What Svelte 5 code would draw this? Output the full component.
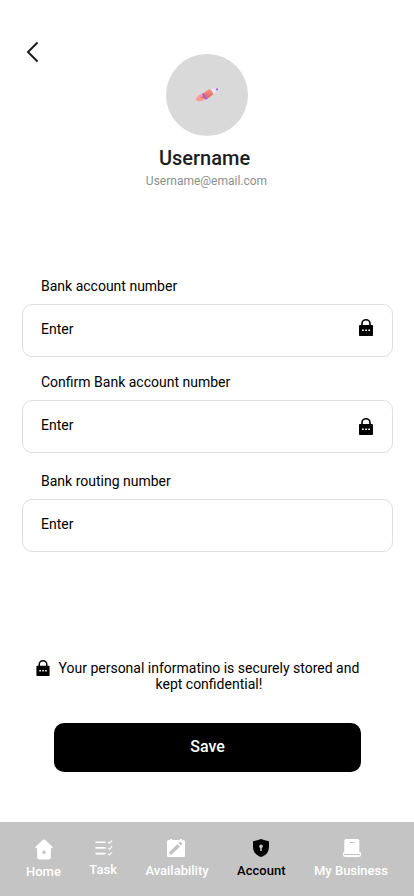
<script>
  const fields = [
    { id: 'account', label: 'Bank account number', lock: true },
    { id: 'confirm', label: 'Confirm Bank account number', lock: true },
    { id: 'routing', label: 'Bank routing number', lock: false }
  ];
</script>

{#snippet lock()}
  <svg class="lock" width="14" height="17" viewBox="0 0 14 17">
    <path d="M3 7V4.5a4 3.7 0 0 1 8 0V7" fill="none" stroke="#000" stroke-width="1.6" />
    <rect y="6" width="14" height="11" rx="0.8" fill="#000" />
    <path d="M3.1 11.3h1.7M6.2 11.3h1.7M9.3 11.3H11" stroke="#fff" stroke-width="1.6" />
  </svg>
{/snippet}

<main>
  <header>
    <button class="back" aria-label="Back">
      <svg width="13" height="22" viewBox="0 0 13 22">
        <path d="M11.5 1.5 2 11l9.5 9.5" fill="none" stroke="#1d1d1d" stroke-width="2" />
      </svg>
    </button>
    <div class="avatar">
      <svg width="24" height="16" viewBox="0 0 24 16">
        <defs>
          <linearGradient id="body" x1="0" y1="0" x2="0" y2="1">
            <stop offset="0" stop-color="#f4948b" />
            <stop offset="1" stop-color="#df625e" />
          </linearGradient>
        </defs>
        <path d="M8 6.2Q2.5 8 1 11.5q-.5 2.5 3 3 4-.1 7-2.9Z" fill="#f9a198" />
        <path d="M8.5 7.7 5 11l4.8 1Z" fill="#ee7770" />
        <path d="m8 6.4 7-4.8q3 1.8 3.3 5.9l-6.9 4.9q-3.1-1.3-3.4-6Z" fill="url(#body)" />
        <path d="m14.6 2 7-.4.7 1.5-4.1 4.4q-.5-3.9-3.6-5.5Z" fill="#e9e7ed" />
        <path d="M8.1 6.4q.6 3.8 3.2 5.8" fill="none" stroke="#a052f5" stroke-width="1.7" />
        <path d="m20.5 2 2.3-1 .2 1.6-1.5 1.2Z" fill="#9961ef" />
      </svg>
    </div>
    <h1>Username</h1>
    <p class="email">Username@email.com</p>
  </header>

  <form>
    {#each fields as field}
      <div class="field {field.id}">
        <span class="label">{field.label}</span>
        <div class="box">
          <span>Enter</span>
          {#if field.lock}{@render lock()}{/if}
        </div>
      </div>
    {/each}
  </form>

  <div class="notice">
    {@render lock()}
    <p>Your personal informatino is securely stored and<br />kept confidential!</p>
  </div>

  <button class="save">Save</button>

  <nav>
    <div class="item home">
      <svg width="18" height="21" viewBox="0 0 18 21">
        <path fill="#fff" fill-rule="evenodd" d="M8 .8Q9 0 10 .8l7.4 7q1 1.4-.9 1.5h-.6v8.9q0 2.3-2.3 2.3H4.4q-2.3 0-2.3-2.3V9.3h-.6Q-.4 9.2.6 7.8ZM9 11.6a1.7 1.7 0 1 0 0 3.4 1.7 1.7 0 0 0 0-3.4Z" />
      </svg>
      <span>Home</span>
    </div>
    <div class="item task">
      <svg width="18" height="16" viewBox="0 0 18 16">
        <g fill="none" stroke="#fff" stroke-linecap="round" stroke-linejoin="round">
          <path d="M1 2.2h9M1 7.9h9M1 13.6h9" stroke-width="1.6" />
          <path d="m13.5 2.2 1.1 1 2.2-2.4m-3.3 7.3 1.1 1 2.2-2.4m-3.3 7.2 1.1 1 2.2-2.4" stroke-width="1.1" />
        </g>
      </svg>
      <span>Task</span>
    </div>
    <div class="item availability">
      <svg width="18" height="18" viewBox="0 0 18 18">
        <path d="M1.5 1H3V0h2v1h8V0h2v1h1.5Q18 1 18 2.5v14q0 1.5-1.5 1.5h-15Q0 18 0 16.5v-14Q0 1 1.5 1Z" fill="#fff" />
        <path d="m2.4 13.1 8.1-8.2 2.5 2.5-8.1 8.2H2.4ZM11.3 4.1l1-1q.8-.6 1.5 0l1 1q.7.7 0 1.5l-1 1Z" fill="#c4c4c4" />
      </svg>
      <span>Availability</span>
    </div>
    <div class="item account">
      <svg width="16" height="18" viewBox="0 0 16 18">
        <path d="M8 0q4 1.8 7.2 1.9.8.1.8.9v4.7Q16 14.6 9.5 17.5q-1.5.7-3 0Q0 14.6 0 7.5V2.8q0-.8.8-.9Q4 1.8 8 0Z" fill="#000" />
        <path d="M8 5.4a1.9 1.9 0 0 0-.8 3.6V12h1.6V9A1.9 1.9 0 0 0 8 5.4Z" fill="#c4c4c4" />
      </svg>
      <span>Account</span>
    </div>
    <div class="item business">
      <svg width="18" height="18" viewBox="0 0 18 18">
        <path d="M3.5 0h11q1.8 0 1.8 1.8v11.1h.7q1 0 1 1v1.8Q18 18 15.7 18H2.3Q0 18 0 15.7v-1.8q0-1 1-1h.3V2Q1.3 0 3.5 0Z" fill="#fff" />
        <path d="M7.4 3.5h3.5" stroke="#c4c4c4" stroke-width="1.2" stroke-linecap="round" />
        <path d="M1 15.5h16" stroke="#c4c4c4" stroke-width="1.2" />
      </svg>
      <span>My Business</span>
    </div>
  </nav>
</main>

<style>
  :global(body) {
    background: #fff;
  }
  main {
    display: flex;
    flex-direction: column;
    box-sizing: border-box;
    width: 414px;
    height: 896px;
    font-family: Roboto, sans-serif;
    color: #000;
    background: #fff;
  }
  h1,
  p {
    margin: 0;
  }
  button {
    padding: 0;
    border: 0;
    font: inherit;
    background: none;
  }
  svg {
    display: block;
    flex: none;
  }
  header {
    display: flex;
    flex-direction: column;
    align-items: center;
    height: 277px;
  }
  .back {
    align-self: flex-start;
    height: 22px;
    margin: 41px 0 -9px 26px;
  }
  .avatar {
    display: flex;
    align-items: center;
    justify-content: center;
    width: 82px;
    height: 82px;
    border-radius: 50%;
    background: #d9d9d9;
  }
  h1 {
    margin: 10px 5px 0 0;
    font-size: 20px;
    line-height: 24px;
    font-weight: 500;
    color: #1d1d1d;
  }
  .email {
    margin: 4px 1px 0 0;
    font-size: 12px;
    line-height: 14px;
    color: #8e8e8e;
  }
  form {
    display: flex;
    flex-direction: column;
    padding: 0 21px 0 22px;
  }
  .field {
    height: 96px;
  }
  .confirm {
    height: 99px;
  }
  .routing {
    height: 80px;
  }
  .label {
    display: block;
    padding-left: 19px;
    margin-bottom: 9px;
    font-size: 14px;
    line-height: 18px;
  }
  .box {
    display: flex;
    align-items: center;
    justify-content: space-between;
    box-sizing: border-box;
    height: 53px;
    padding: 0 19px 3px 18px;
    border: 1px solid #dedede;
    border-radius: 10px;
    font-size: 14px;
    line-height: 18px;
  }
  .account .lock {
    margin-bottom: 3px;
  }
  .confirm .lock {
    margin-top: 3px;
  }
  .notice {
    display: flex;
    gap: 8.5px;
    margin: 108px 0 0 36px;
    font-size: 14px;
    line-height: 16px;
    text-align: center;
  }
  .notice .lock {
    height: 16px;
  }
  .save {
    width: 307px;
    height: 49px;
    margin: 31px 0 50px 54px;
    padding-bottom: 2px;
    border-radius: 10px;
    font-size: 16px;
    font-weight: 500;
    color: #fff;
    background: #000;
  }
  nav {
    display: flex;
    align-items: flex-start;
    box-sizing: border-box;
    height: 74px;
    padding: 17px 26px 0;
    justify-content: space-between;
    font-size: 13px;
    line-height: 15px;
    font-weight: 500;
    color: #fff;
    background: #c4c4c4;
  }
  .item {
    display: flex;
    flex-direction: column;
    align-items: center;
    gap: 6px;
    white-space: nowrap;
  }
  .task {
    padding-top: 1px;
  }
  .task svg {
    margin-left: 2px;
  }
  .availability svg {
    margin-right: 2px;
  }
  .business svg {
    margin-left: 2px;
  }
  .item.account {
    color: #000;
  }
  .home {
    gap: 4px;
  }
  .home svg {
    margin-left: 1px;
  }
</style>
